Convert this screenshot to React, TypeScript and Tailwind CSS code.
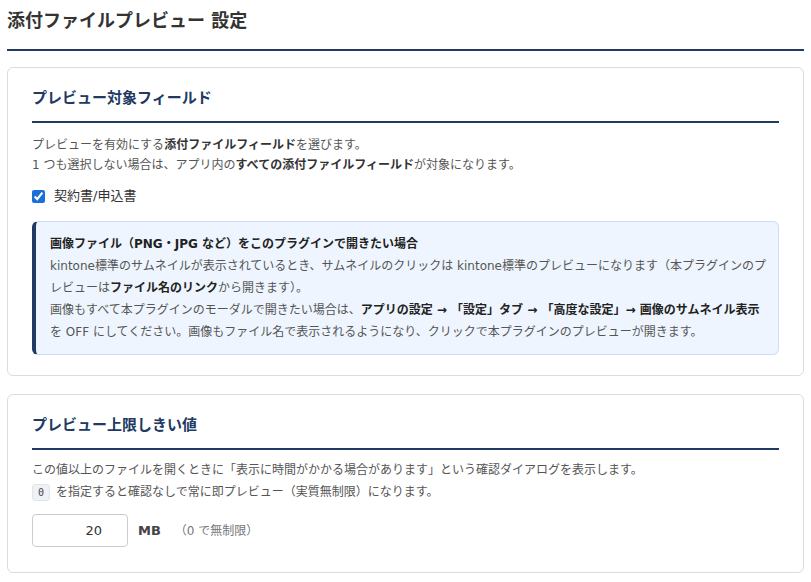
import React from "react";

const FONT = "font-['DejaVu_Sans','Noto_Sans_CJK_JP',sans-serif]";

const SectionCard: React.FC<{ title: string; className?: string; children: React.ReactNode }> = ({
  title,
  className = "",
  children,
}) => (
  <section className={`rounded-md border border-[#dcdcdc] bg-white px-6 pt-[19px] ${className}`}>
    <h2 className="border-b-2 border-[#203a63] pb-3 text-[15px] leading-[22px] font-bold text-[#203a63]">
      {title}
    </h2>
    {children}
  </section>
);

const App: React.FC = () => {
  return (
    <div className={`min-h-screen bg-white px-[7px] pt-2 ${FONT}`}>
      <h1 className="border-b-2 border-[#203a63] pb-[15px] text-[18px] leading-[26px] font-bold text-[#333]">
        添付ファイルプレビュー 設定
      </h1>

      {/* 対象フィールド */}
      <SectionCard title="プレビュー対象フィールド" className="mt-4 pb-5">
        <p className="mt-3 text-[12px] leading-[20px] text-[#555]">
          プレビューを有効にする<b className="text-[#333]">添付ファイルフィールド</b>を選びます。
          <br />1 つも選択しない場合は、アプリ内の
          <b className="text-[#333]">すべての添付ファイルフィールド</b>が対象になります。
        </p>

        <label className="mt-[11px] flex h-5 items-center gap-[9px] text-[13px] text-[#333]">
          <input type="checkbox" checked readOnly className="h-[13px] w-[13px] accent-[#1a6fd9]" />
          契約書/申込書
        </label>

        <div className="mt-[15px] rounded-md border border-l-4 border-[#c9ddf6] border-l-[#203a63] bg-[#eef5fe] py-[11px] pr-[12px] pl-[14px] text-[12px] leading-[22px] text-[#555]">
          <p className="font-bold text-[#222]">画像ファイル（PNG・JPG など）をこのプラグインで開きたい場合</p>
          <p>
            kintone標準のサムネイルが表示されているとき、サムネイルのクリックは kintone標準のプレビューになります（本プラグインのプレビューは
            <b className="text-[#222]">ファイル名のリンク</b>から開きます）。
          </p>
          <p>
            画像もすべて本プラグインのモーダルで開きたい場合は、
            <b className="text-[#222]">アプリの設定 → 「設定」タブ → 「高度な設定」→ 画像のサムネイル表示</b>
            を OFF にしてください。画像もファイル名で表示されるようになり、クリックで本プラグインのプレビューが開きます。
          </p>
        </div>
      </SectionCard>

      {/* しきい値 */}
      <SectionCard title="プレビュー上限しきい値" className="mt-[18px] pb-[25px]">
        <p className="mt-[9px] text-[12px] leading-[22px] text-[#555]">
          この値以上のファイルを開くときに「表示に時間がかかる場合があります」という確認ダイアログを表示します。
          <br />
          <code className="mr-[6px] inline-flex h-[17px] items-center rounded-[3px] border border-[#e1e5ea] bg-[#eef1f5] px-[5px] align-middle font-['DejaVu_Sans_Mono',monospace] text-[10px] text-[#444]">
            0
          </code>
          を指定すると確認なしで常に即プレビュー（実質無制限）になります。
        </p>

        <div className="mt-[11px] flex items-center">
          <input
            type="text"
            value="20"
            readOnly
            className="h-[33px] w-[96px] rounded-[4px] border border-[#cccccc] bg-white pr-[25px] text-right text-[13px] text-[#333] outline-none"
          />
          <span className="ml-[10px] text-[13px] font-bold text-[#444]">MB</span>
          <span className="ml-[14px] text-[12px] text-[#777]">（0 で無制限）</span>
        </div>
      </SectionCard>
    </div>
  );
};

export default App;
